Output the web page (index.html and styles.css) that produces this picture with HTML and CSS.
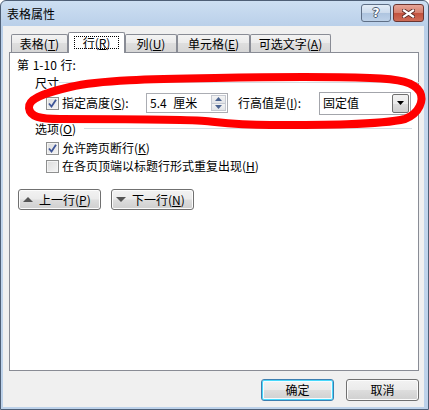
FILE: index.html
```html
<!DOCTYPE html>
<html lang="zh-CN">
<head>
<meta charset="utf-8">
<title>表格属性</title>
<link rel="stylesheet" href="styles.css">
</head>
<body>
<div class="window">
  <div class="titlebar">
    <span class="title">表格属性</span>
    <div class="caption-btns">
      <div class="cap help"><span>?</span></div>
      <div class="cap close">
        <svg width="13" height="9" viewBox="0 0 13 9">
          <path d="M2 1.5 L11 7.5 M11 1.5 L2 7.5" stroke="#5a2a24" stroke-width="4" stroke-linecap="square"/>
          <path d="M2 1.5 L11 7.5 M11 1.5 L2 7.5" stroke="#ffffff" stroke-width="2.2" stroke-linecap="square"/>
        </svg>
      </div>
    </div>
  </div>
  <div class="client">
    <div class="tabs">
      <div class="tab w1">表格(<u>T</u>)</div>
      <div class="tab w2 active"><span class="focus">行(<u>R</u>)</span></div>
      <div class="tab w3">列(<u>U</u>)</div>
      <div class="tab w4">单元格(<u>E</u>)</div>
      <div class="tab w5">可选文字(<u>A</u>)</div>
    </div>
    <div class="panel">
      <div class="row r1">第 1-10 行:</div>
      <div class="row group r2"><span>尺寸</span><span class="gline"></span></div>
      <div class="row r3">
        <span class="cb checked"><svg width="9" height="9" viewBox="0 0 9 9"><path d="M1 4.5 L3.5 7.5 L8 0.8" fill="none" stroke="#3e5597" stroke-width="1.8"/></svg></span>
        <span class="lbl">指定高度(<u>S</u>):</span>
        <div class="spin">
          <span class="val">5.4 厘米</span>
          <div class="spinbtns">
            <span class="sb"><svg width="7" height="4" viewBox="0 0 7 4"><path d="M0 4 L3.5 0 L7 4 Z" fill="#4b6390"/></svg></span>
            <span class="sb"><svg width="7" height="4" viewBox="0 0 7 4"><path d="M0 0 L3.5 4 L7 0 Z" fill="#4b6390"/></svg></span>
          </div>
        </div>
        <span class="lbl2">行高值是(<u>I</u>):</span>
        <div class="select">
          <span class="val">固定值</span>
          <span class="dd"><svg width="7" height="4" viewBox="0 0 7 4"><path d="M0 0 L3.5 4 L7 0 Z" fill="#000"/></svg></span>
        </div>
      </div>
      <div class="row group r4"><span>选项(<u>O</u>)</span><span class="gline"></span></div>
      <div class="row chk r5">
        <span class="cb checked"><svg width="9" height="9" viewBox="0 0 9 9"><path d="M1 4.5 L3.5 7.5 L8 0.8" fill="none" stroke="#3e5597" stroke-width="1.8"/></svg></span>
        <span class="lbl">允许跨页断行(<u>K</u>)</span>
      </div>
      <div class="row chk r6">
        <span class="cb"></span>
        <span class="lbl">在各页顶端以标题行形式重复出现(<u>H</u>)</span>
      </div>
      <div class="row r7">
        <div class="btn nav"><svg width="10" height="5" viewBox="0 0 10 5"><path d="M0 5 L5 0 L10 5 Z" fill="#555"/></svg><span>上一行(<u>P</u>)</span></div>
        <div class="btn nav"><svg width="10" height="5" viewBox="0 0 10 5"><path d="M0 0 L5 5 L10 0 Z" fill="#555"/></svg><span>下一行(<u>N</u>)</span></div>
      </div>
    </div>
    <div class="footer">
      <div class="btn default">确定</div>
      <div class="btn">取消</div>
    </div>
  </div>
  <svg class="annot" width="429" height="410" viewBox="0 0 429 410">
    <path d="M215 78 C150 79 100 80 70 87 C40 94 28 100 29 108 C30 117 40 119 60 119 C120 119 180 119 205 121 C225 123 240 125 270 125 C320 125 380 125 405 119 C420 113 424 100 420 92 C414 82 400 79 370 78 C320 76 260 77 215 78 Z" fill="none" stroke="#ff0000" stroke-width="8" stroke-linejoin="round" stroke-linecap="round"/>
  </svg>
</div>
</body>
</html>
```

FILE: styles.css
```css
* { box-sizing: border-box; }
html, body { margin: 0; padding: 0; }
body {
  width: 429px;
  height: 410px;
  overflow: hidden;
  font-family: "Noto Sans CJK SC", "Noto Sans", sans-serif;
  font-size: 12px;
  color: #000;
  background: #fff;
}
u { text-decoration: underline; text-underline-offset: 1px; }

.window {
  position: relative;
  width: 429px;
  height: 410px;
  border: 1px solid #4e5f76;
  border-radius: 6px 6px 0 0;
  background: linear-gradient(to bottom, #cddff2 0, #b9cfe9 26px, #c3d6ec 120px, #bdd2ea 100%);
  padding: 0 4px 2px 2px;
  display: flex;
  flex-direction: column;
}

.titlebar {
  height: 25px;
  display: flex;
  align-items: flex-start;
  justify-content: space-between;
}
.title {
  margin: 6px 0 0 4px;
  line-height: 14px;
  font-size: 12px;
}
.caption-btns {
  display: flex;
  gap: 2px;
  margin-top: 3px;
}
.cap {
  height: 18px;
  border: 1px solid #5f6f86;
  border-radius: 3px;
  display: flex;
  align-items: center;
  justify-content: center;
}
.help {
  width: 30px;
  background: linear-gradient(to bottom, #e4edf7 0, #cbdaec 50%, #aec4df 51%, #bdd1e8 100%);
}
.help span {
  font-family: "DejaVu Sans", sans-serif;
  font-weight: bold;
  font-size: 12px;
  line-height: 12px;
  color: #fff;
  text-shadow: 1px 0 0 #4a5a70, -1px 0 0 #4a5a70, 0 1px 0 #4a5a70, 0 -1px 0 #4a5a70;
}
.close {
  width: 31px;
  border-color: #6b3530;
  background: linear-gradient(to bottom, #e7a597 0, #d57f6d 50%, #c2513d 51%, #cf6c57 100%);
}

.client {
  flex: 1;
  background: #f0f0f0;
  padding: 6px 5px 0 6px;
  display: flex;
  flex-direction: column;
}

.tabs {
  height: 20px;
  display: flex;
  align-items: flex-end;
  padding-left: 2px;
  position: relative;
  z-index: 1;
}
.tab {
  height: 18px;
  border: 1px solid #898c95;
  border-bottom: none;
  border-radius: 2px 2px 0 0;
  background: linear-gradient(to bottom, #f3f3f3 0, #ebebeb 45%, #dedede 50%, #d6d6d6 100%);
  display: flex;
  align-items: center;
  justify-content: center;
  line-height: 14px;
  white-space: nowrap;
}
.w1 { width: 57px; }
.w2 { width: 57px; }
.w3 { width: 52px; }
.w4 { width: 73px; }
.w5 { width: 81px; }
.tab.active {
  height: 21px;
  margin-bottom: -1px;
  background: #fff;
  padding-bottom: 1px;
}
.focus {
  border: 1px dotted #000;
  padding: 0 8px;
  line-height: 11px;
  height: 13px;
  display: inline-flex;
  align-items: center;
}

.panel {
  width: 410px;
  height: 319px;
  border: 1px solid #898c95;
  background: #fff;
  padding-top: 5px;
}
.row {
  display: flex;
  align-items: center;
  white-space: nowrap;
}
.r1 { height: 13px; padding-left: 7px; word-spacing: 1px; }
.group { height: 14px; padding-left: 25px; }
.r2 { margin-top: 4px; }
.gline {
  flex: 0 0 auto;
  width: 328px;
  height: 1px;
  background: #d5dfe5;
  margin-left: auto;
  margin-right: 6px;
}
.r2 .gline { width: 360px; }
.r3 { height: 24px; margin-top: 2px; padding-left: 36px; }
.r4 { margin-top: 6px; }
.chk { height: 18px; padding-left: 36px; }
.r5 { margin-top: 4px; }
.r7 { height: 21px; margin-top: 14px; padding-left: 8px; gap: 10px; align-items: stretch; }

.cb {
  flex: 0 0 13px;
  width: 13px;
  height: 13px;
  border: 1px solid #8e8f8f;
  background: linear-gradient(135deg, #dcdcdc 0, #f4f4f4 100%);
  box-shadow: inset 0 0 0 1px #f4f4f4;
  display: flex;
  align-items: center;
  justify-content: center;
}
.lbl { margin-left: 3px; line-height: 14px; }
.r3 .lbl { width: 84px; }
.spin {
  width: 82px;
  height: 20px;
  border: 1px solid #abadb3;
  background: #fff;
  display: flex;
  align-items: center;
  padding: 0 1px 0 3px;
}
.spin .val { flex: 1; line-height: 14px; word-spacing: 4px; }
.spinbtns {
  width: 15px;
  height: 16px;
  display: flex;
  flex-direction: column;
}
.sb {
  flex: 1;
  border: 1px solid #c6cad2;
  background: linear-gradient(to bottom, #f4f4f4, #e2e4e8);
  display: flex;
  align-items: center;
  justify-content: center;
}
.sb + .sb { border-top: none; }
.lbl2 { width: 81px; margin-left: 10px; line-height: 14px; }
.select {
  width: 92px;
  height: 23px;
  border: 1px solid #a3a5ab;
  background: #fff;
  display: flex;
  align-items: center;
  padding: 0 1px 0 3px;
}
.select .val { flex: 1; line-height: 14px; }
.dd {
  width: 17px;
  height: 19px;
  border: 1px solid #707070;
  border-radius: 2px;
  background: linear-gradient(to bottom, #f2f2f2 0, #ebebeb 50%, #dddddd 51%, #cfcfcf 100%);
  display: flex;
  align-items: center;
  justify-content: center;
}

.btn {
  border: 1px solid #707070;
  border-radius: 3px;
  background: linear-gradient(to bottom, #f2f2f2 0, #ebebeb 48%, #dddddd 52%, #cfcfcf 100%);
  box-shadow: inset 0 0 0 1px #fcfcfc;
  display: flex;
  align-items: center;
  justify-content: center;
  line-height: 14px;
  white-space: nowrap;
}
.nav {
  width: 83px;
  justify-content: flex-start;
  padding-left: 4px;
  gap: 6px;
}
.footer {
  display: flex;
  justify-content: flex-end;
  gap: 12px;
  margin-top: 8px;
  width: 410px;
}
.footer .btn { width: 73px; height: 22px; }
.btn.default {
  border-color: #3c7fb1;
  box-shadow: inset 0 0 0 1px #48d8fb, inset 0 0 0 2px #f4fbff;
}

.annot {
  position: absolute;
  left: -1px;
  top: -1px;
  pointer-events: none;
  z-index: 5;
}
```
